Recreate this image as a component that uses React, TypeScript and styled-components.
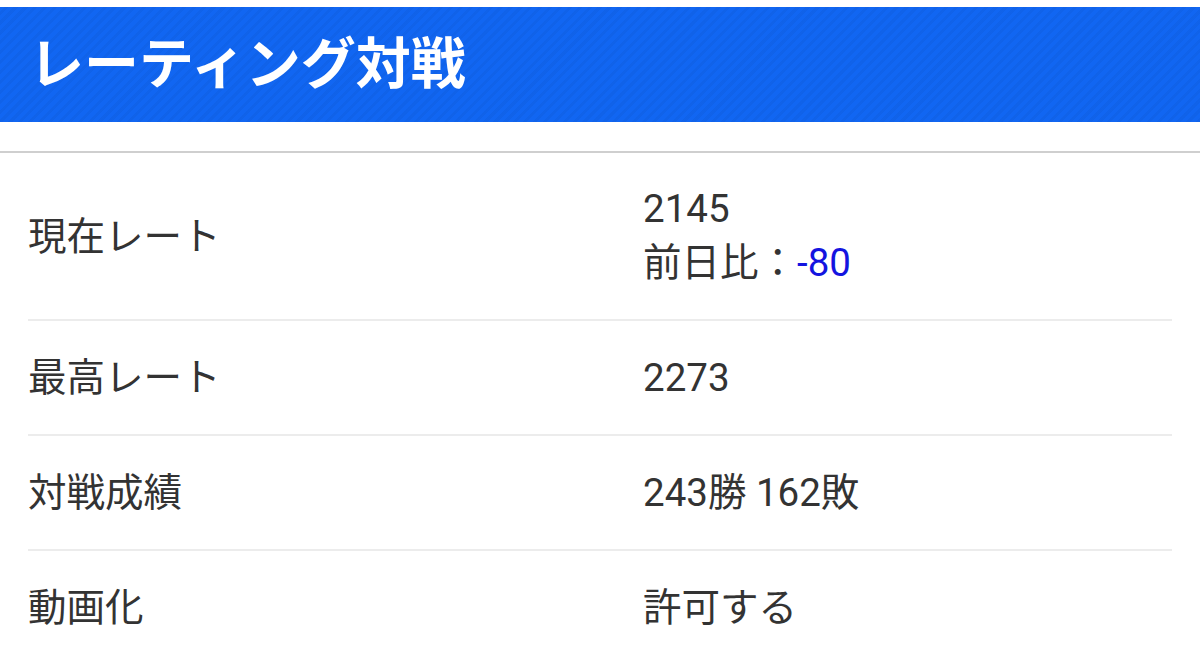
import React from "react";
import styled, { createGlobalStyle } from "styled-components";

const Global = createGlobalStyle`
  html, body { margin: 0; padding: 0; background: #fff; }
  body { font-family: Roboto, "Noto Sans CJK JP", sans-serif; }
`;

const Page = styled.div`
  width: 1200px;
  height: 658px;
  overflow: hidden;
  padding-top: 7px;
  box-sizing: border-box;
`;

const Header = styled.header`
  height: 115px;
  box-sizing: border-box;
  display: flex;
  align-items: center;
  padding-left: 29px;
  padding-bottom: 11px;
  background-color: #1166f2;
  background-image: repeating-linear-gradient(
    -45deg,
    rgba(0, 0, 0, 0.035) 0px,
    rgba(0, 0, 0, 0.035) 3px,
    transparent 3px,
    transparent 7px
  );
`;

const Title = styled.h1`
  margin: 0;
  color: #fff;
  font-family: "Noto Sans CJK JP", sans-serif;
  font-weight: 700;
  font-size: 55px;
  line-height: 1;
`;

const Rule = styled.div`
  margin-top: 29px;
  height: 2px;
  background: #cfcfcf;
`;

const Table = styled.div`
  padding: 0 28px;
  display: flex;
  flex-direction: column;
`;

const Row = styled.div`
  display: grid;
  grid-template-columns: 615px 1fr;
  align-items: center;
  padding: 29px 0;
  border-bottom: 2px solid #ececec;
  &:last-child { border-bottom: none; }
`;

const Label = styled.div`
  font-family: Roboto, "Noto Sans CJK JP", sans-serif;
  font-size: 38.5px;
  line-height: 55px;
  color: #333;
`;

const Value = styled.div`
  font-family: Roboto, "Noto Sans CJK JP", sans-serif;
  font-size: 38.5px;
  line-height: 54px;
  color: #333;
`;

const Diff = styled.span`
  color: #1414e0;
`;

export default function App() {
  return (
    <Page>
      <Global />
      <Header>
        <Title>レーティング対戦</Title>
      </Header>
      <Rule />
      <Table>
        <Row>
          <Label>現在レート</Label>
          <Value>
            2145
            <br />
            前日比：<Diff>-80</Diff>
          </Value>
        </Row>
        <Row>
          <Label>最高レート</Label>
          <Value>2273</Value>
        </Row>
        <Row>
          <Label>対戦成績</Label>
          <Value>243勝 162敗</Value>
        </Row>
        <Row>
          <Label>動画化</Label>
          <Value>許可する</Value>
        </Row>
      </Table>
    </Page>
  );
}
